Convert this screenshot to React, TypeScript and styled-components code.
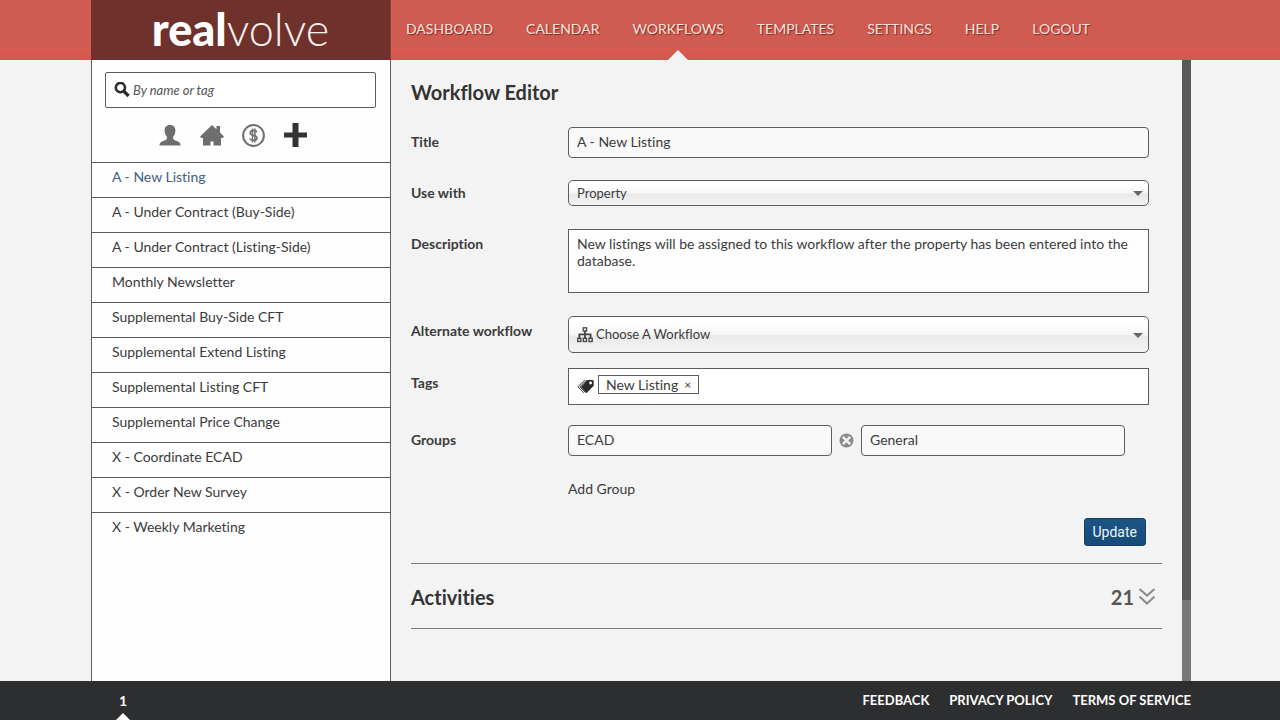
import React from "react";
import styled, { createGlobalStyle } from "styled-components";

const INK = "#3b3b3b";
const LINE = "#5c5c5c";
const PAPER = "#f3f3f3";

const GlobalStyle = createGlobalStyle`
  *, *::before, *::after { box-sizing: border-box; }
  body {
    margin: 0;
    background: ${PAPER};
    color: ${INK};
    font-family: Lato, "Liberation Sans", sans-serif;
    font-size: 14px;
    line-height: 18px;
    font-variant-ligatures: none;
  }
  a { color: inherit; text-decoration: none; }
  button, input, select, textarea { font: inherit; color: inherit; font-variant-ligatures: none; }
`;

const Page = styled.div`
  min-height: 100vh;
  display: flex;
  flex-direction: column;
`;

const Header = styled.header`
  height: 60px;
  padding: 0 89px 0 91px;
  background: linear-gradient(to bottom, #d05c51 0, #d05c51 48px, #db5a50 49px, #cf584d 60px);
`;

const HeaderInner = styled.div`
  display: flex;
  height: 100%;
`;

const Logo = styled.a`
  flex: 0 0 300px;
  background: #6e312c;
  border-right: 1px solid #8a3f38;
  color: #fdf1ee;
  font-size: 45px;
  line-height: 58px;
  font-weight: 300;
  text-align: center;
`;

const LogoBold = styled.span`
  font-weight: 900;
  color: #ffffff;
`;

const Nav = styled.nav`
  display: flex;
  gap: 33px;
  padding-left: 15px;
`;

const NavLink = styled.a`
  position: relative;
  color: #fbe3dc;
  line-height: 58px;
  white-space: nowrap;
  text-shadow: 1px 1px 1px rgba(90, 20, 20, 0.7);

  &[aria-current]::after {
    content: "";
    position: absolute;
    left: 50%;
    bottom: 0;
    margin-left: -10px;
    border: 10px solid transparent;
    border-top: 0;
    border-bottom-color: ${PAPER};
  }
`;

const Body = styled.div`
  flex: 1;
  display: flex;
  padding: 0 89px 0 91px;
`;

const Sidebar = styled.aside`
  flex: 0 0 300px;
  background: #fefefe;
  border: solid ${LINE};
  border-width: 0 1px;
`;

const SearchBox = styled.label`
  display: flex;
  align-items: center;
  gap: 3px;
  height: 36px;
  margin: 12px 14px 0 13px;
  padding: 0 8px;
  border: 1px solid ${LINE};
  border-radius: 2px;
  background: #ffffff;
`;

const SearchInput = styled.input`
  flex: 1;
  min-width: 0;
  border: 0;
  padding: 0;
  background: none;
  outline: none;
  font-size: 13px;
  font-style: italic;
  &::placeholder { color: #555555; opacity: 1; }
`;

const Filters = styled.div`
  display: flex;
  justify-content: center;
  align-items: center;
  gap: 18px;
  height: 54px;
  padding-right: 16px;
`;

const IconButton = styled.button<{ $dark?: boolean }>`
  display: flex;
  padding: 0;
  border: 0;
  background: none;
  color: ${(p) => (p.$dark ? "#333333" : "#6e6e6e")};
  cursor: pointer;
`;

const WorkflowList = styled.ul`
  margin: 0;
  padding: 0;
  list-style: none;
`;

const WorkflowItem = styled.li`
  border-top: 1px solid ${LINE};
`;

const WorkflowLink = styled.a`
  display: block;
  padding: 5px 20px 11px;
  &[aria-current] { color: #40607f; }
`;

const Main = styled.main`
  flex: 1;
  min-width: 0;
  padding: 21px 20px 40px;
`;

const Heading = styled.h1`
  margin: 0 0 24px;
  font-size: 20px;
  line-height: 22px;
  color: #333333;
`;

const Form = styled.form`
  display: flex;
  flex-direction: column;
  padding-right: 13px;
`;

const Row = styled.div<{ $gap: number }>`
  display: grid;
  grid-template-columns: 157px 1fr;
  align-items: start;
  margin-bottom: ${(p) => p.$gap}px;
`;

const Label = styled.label<{ $compact?: boolean }>`
  padding-top: ${(p) => (p.$compact ? 4 : 6)}px;
  font-weight: 700;
`;

const TextField = styled.input`
  width: 100%;
  min-width: 0;
  height: 31px;
  padding: 0 8px 2px;
  border: 1px solid ${LINE};
  border-radius: 4px;
  background: #f9f9f9;
`;

const TextArea = styled.textarea`
  display: block;
  width: 100%;
  height: 64px;
  padding: 5px 8px;
  border: 1px solid ${LINE};
  border-radius: 0;
  background: #fefefe;
  line-height: 17px;
  resize: none;
`;

const SelectWrap = styled.div`
  position: relative;
  color: #555555;
`;

const Select = styled.select<{ $tall?: boolean }>`
  display: block;
  width: 100%;
  height: ${(p) => (p.$tall ? 37 : 26)}px;
  padding: 0 24px 1px ${(p) => (p.$tall ? 27 : 8)}px;
  border: 1px solid ${LINE};
  border-radius: 5px;
  background: linear-gradient(to bottom, #ffffff 20%, #f6f6f6 50%, #e9e9e9 54%, #f4f4f4 100%);
  font-size: 13px;
  color: ${INK};
  appearance: none;
`;

const SelectIcon = styled.span`
  position: absolute;
  left: 9px;
  top: 0;
  bottom: 0;
  display: flex;
  align-items: center;
  color: #444444;
  pointer-events: none;
`;

const SelectArrow = styled.span`
  position: absolute;
  right: 6px;
  top: 50%;
  border: 5px solid transparent;
  border-top-color: #666666;
  border-bottom: 0;
  margin-top: -2px;
  pointer-events: none;
`;

const TagBox = styled.div`
  display: flex;
  align-items: flex-start;
  gap: 4px;
  height: 37px;
  padding: 6px 8px;
  border: 1px solid ${LINE};
  background: #ffffff;
`;

const TagMark = styled.span`
  display: flex;
  padding-top: 3px;
`;

const Tag = styled.span`
  display: flex;
  gap: 6px;
  height: 19px;
  padding: 0 7px;
  border: 1px solid ${LINE};
  line-height: 17px;
`;

const TagRemove = styled.button`
  padding: 0;
  border: 0;
  background: none;
  font-size: 12px;
  line-height: 17px;
  cursor: pointer;
`;

const TagInput = styled.input`
  flex: 1;
  min-width: 0;
  height: 19px;
  border: 0;
  padding: 0;
  outline: none;
`;

const Groups = styled.div`
  display: grid;
  grid-template-columns: 1fr 29px 1fr 24px;
  align-items: center;
  justify-items: center;
`;

const TextButton = styled.button`
  grid-column: 2;
  justify-self: start;
  padding: 0;
  border: 0;
  background: none;
  cursor: pointer;
`;

const Submit = styled.button`
  align-self: flex-end;
  height: 28px;
  margin-right: 3px;
  padding: 0 8px;
  border: 1px solid #17405f;
  border-radius: 3px;
  background: linear-gradient(to bottom, #1c5584, #174a78);
  color: #eef5fb;
  font-family: Roboto, "Liberation Sans", sans-serif;
`;

const Activities = styled.section`
  display: flex;
  align-items: center;
  justify-content: space-between;
  height: 66px;
  margin-top: 17px;
  padding: 2px 6px 0 0;
  border: solid #777777;
  border-width: 1px 0;
`;

const SectionTitle = styled.h2`
  margin: 0;
  font-size: 20px;
  line-height: 22px;
  color: #333333;
`;

const Toggle = styled.button`
  display: flex;
  align-items: center;
  gap: 4px;
  padding: 0;
  border: 0;
  background: none;
  color: #555555;
  font-size: 20px;
  line-height: 22px;
  font-weight: 700;
`;

const Scroll = styled.div`
  flex: 0 0 9px;
  display: flex;
  background: #777777;
`;

const ScrollThumb = styled.div`
  flex: 1;
  height: 87%;
  background: #595959;
`;

const Footer = styled.footer`
  display: flex;
  justify-content: space-between;
  height: 39px;
  padding: 0 89px 0 116px;
  background: #2d2e2f;
  color: #ffffff;
  font-size: 13px;
  font-weight: 700;
  line-height: 39px;
`;

const PageNumber = styled.a`
  position: relative;
  width: 14px;
  text-align: center;
  font-size: 14px;
  &::after {
    content: "";
    position: absolute;
    left: 0;
    bottom: 0;
    border: 7px solid transparent;
    border-top: 0;
    border-bottom-color: #ffffff;
  }
`;

const FooterLinks = styled.nav`
  display: flex;
  gap: 20px;
`;

const SearchIcon = () => (
  <svg width="16" height="16" viewBox="0 0 16 16" fill="none" stroke="#2c2c2c" aria-hidden>
    <circle cx="6.4" cy="5.6" r="4.6" strokeWidth="2.6" />
    <path d="M9.6 9 14.600 14" strokeWidth="3.2" />
  </svg>
);

const PersonIcon = () => (
  <svg width="24" height="24" viewBox="0 0 24 24" fill="currentColor" aria-hidden>
    <path d="M12 2c3.600 0 5.500 2.300 5.400 5.700 0 2.600-1 4.700-2.300 6v2c.4 1.300 2.300 1.800 4.400 2.600 1.900.8 3 1.700 3 4.200H1.500c0-2.500 1.100-3.400 3-4.200 2.100-.8 4-1.300 4.400-2.600v-2c-1.300-1.300-2.300-3.400-2.300-6C6.500 4.300 8.400 2 12 2z" />
  </svg>
);

const HouseIcon = () => (
  <svg width="24" height="24" viewBox="0 0 24 24" fill="currentColor" aria-hidden>
    <path d="M12 2 0 13.500 1.300 15H3v7.500h7.500V18.500h3v4H21V15h1.700L24 13.500l-4-4V3h-3.500v3.200z" />
  </svg>
);

const DollarIcon = () => (
  <svg width="24" height="24" viewBox="0 0 24 24" fill="none" stroke="currentColor" aria-hidden>
    <circle cx="11.500" cy="12.500" r="10.400" strokeWidth="2" />
    <path d="M15 9.300C14.500 8.100 13.300 7.600 11.600 7.600c-2 0-3.500.9-3.500 2.300 0 3.500 7 1.600 7 5.100 0 1.600-1.500 2.500-3.500 2.500-1.900 0-3.300-.7-3.800-2M10.500 5.500v14M12.900 5.500v14" strokeWidth="1.500" />
  </svg>
);

const PlusIcon = () => (
  <svg width="24" height="24" viewBox="0 0 24 24" fill="currentColor" aria-hidden>
    <path d="M8.500 0h6v9.500H23v5h-8.500V24h-6v-9.500H-1v-5h9.500z" />
  </svg>
);

const TreeIcon = () => (
  <svg width="16" height="16" viewBox="0 0 16 16" fill="none" stroke="currentColor" strokeWidth="1.300" aria-hidden>
    <rect x="6.200" y="0.800" width="3.400" height="3.200" />
    <path d="M8 4v7M2.400 11V7.400h11.200V11" strokeWidth="1.800" />
    <rect x="0.700" y="11.300" width="3.200" height="3.200" />
    <rect x="6.300" y="11.300" width="3.200" height="3.200" />
    <rect x="12" y="11.300" width="3.200" height="3.200" />
  </svg>
);

const TagsIcon = () => (
  <svg width="17" height="16" viewBox="0 0 17 16" aria-hidden>
    <path d="M8 2 .8 8.800l6 6M10 2 2.800 8.800l6 6" fill="none" stroke="#444444" />
    <path d="M10.500 2h4.700c1 0 1.500.5 1.500 1.500v4.200L9.600 15 3.800 9z" fill="#2b2b2b" />
    <circle cx="13.600" cy="5" r="1.400" fill="#ffffff" />
  </svg>
);

const RemoveIcon = () => (
  <svg width="15" height="15" viewBox="0 0 15 15" aria-hidden>
    <circle cx="7.500" cy="7.500" r="7" fill="#8b8b8b" />
    <path d="M3.800 3.800l7.400 7.400M11.200 3.800l-7.400 7.400" stroke="#f0f0f0" strokeWidth="2.600" />
  </svg>
);

const ChevronsIcon = () => (
  <svg width="18" height="18" viewBox="0 0 18 18" fill="none" stroke="#8e8e8e" strokeWidth="2.200" aria-hidden>
    <path d="M1.500 1 9 7.500 16.500 1M1.500 8.500 9 15.500l7.500-7" />
  </svg>
);

const NAV = ["DASHBOARD", "CALENDAR", "WORKFLOWS", "TEMPLATES", "SETTINGS", "HELP", "LOGOUT"];

const WORKFLOWS = [
  "A - New Listing",
  "A - Under Contract (Buy-Side)",
  "A - Under Contract (Listing-Side)",
  "Monthly Newsletter",
  "Supplemental Buy-Side CFT",
  "Supplemental Extend Listing",
  "Supplemental Listing CFT",
  "Supplemental Price Change",
  "X - Coordinate ECAD",
  "X - Order New Survey",
  "X - Weekly Marketing",
];

export default function App() {
  return (
    <Page>
      <GlobalStyle />
      <Header>
        <HeaderInner>
          <Logo href="#"><LogoBold>real</LogoBold>volve</Logo>
          <Nav>
            {NAV.map((name) => (
              <NavLink key={name} href="#" aria-current={name === "WORKFLOWS" ? "page" : undefined}>
                {name}
              </NavLink>
            ))}
          </Nav>
        </HeaderInner>
      </Header>

      <Body>
        <Sidebar>
          <SearchBox>
            <SearchIcon />
            <SearchInput type="text" placeholder="By name or tag" aria-label="Search workflows" />
          </SearchBox>
          <Filters>
            <IconButton type="button" aria-label="Contacts"><PersonIcon /></IconButton>
            <IconButton type="button" aria-label="Properties"><HouseIcon /></IconButton>
            <IconButton type="button" aria-label="Transactions"><DollarIcon /></IconButton>
            <IconButton type="button" aria-label="Add workflow" $dark><PlusIcon /></IconButton>
          </Filters>
          <WorkflowList>
            {WORKFLOWS.map((name, i) => (
              <WorkflowItem key={name}>
                <WorkflowLink href="#" aria-current={i === 0 ? "true" : undefined}>{name}</WorkflowLink>
              </WorkflowItem>
            ))}
          </WorkflowList>
        </Sidebar>

        <Main>
          <Heading>Workflow Editor</Heading>
          <Form onSubmit={(e) => e.preventDefault()}>
            <Row $gap={22}>
              <Label htmlFor="title">Title</Label>
              <TextField id="title" defaultValue="A - New Listing" />
            </Row>
            <Row $gap={23}>
              <Label htmlFor="use" $compact>Use with</Label>
              <SelectWrap>
                <Select id="use"><option>Property</option></Select>
                <SelectArrow />
              </SelectWrap>
            </Row>
            <Row $gap={23}>
              <Label htmlFor="description">Description</Label>
              <TextArea
                id="description"
                defaultValue="New listings will be assigned to this workflow after the property has been entered into the database."
              />
            </Row>
            <Row $gap={15}>
              <Label htmlFor="alternate">Alternate workflow</Label>
              <SelectWrap>
                <Select id="alternate" $tall><option>Choose A Workflow</option></Select>
                <SelectIcon><TreeIcon /></SelectIcon>
                <SelectArrow />
              </SelectWrap>
            </Row>
            <Row $gap={20}>
              <Label htmlFor="tags">Tags</Label>
              <TagBox>
                <TagMark><TagsIcon /></TagMark>
                <Tag>New Listing <TagRemove type="button" aria-label="Remove New Listing">×</TagRemove></Tag>
                <TagInput id="tags" />
              </TagBox>
            </Row>
            <Row $gap={24}>
              <Label htmlFor="group">Groups</Label>
              <Groups>
                <TextField id="group" defaultValue="ECAD" />
                <IconButton type="button" aria-label="Remove group ECAD"><RemoveIcon /></IconButton>
                <TextField aria-label="Second group" defaultValue="General" />
              </Groups>
            </Row>
            <Row $gap={20}>
              <TextButton type="button">Add Group</TextButton>
            </Row>
            <Submit type="submit">Update</Submit>
          </Form>
          <Activities>
            <SectionTitle>Activities</SectionTitle>
            <Toggle type="button" aria-label="Show 21 activities">21 <ChevronsIcon /></Toggle>
          </Activities>
        </Main>
        <Scroll><ScrollThumb /></Scroll>
      </Body>

      <Footer>
        <PageNumber href="#">1</PageNumber>
        <FooterLinks>
          <a href="#">FEEDBACK</a>
          <a href="#">PRIVACY POLICY</a>
          <a href="#">TERMS OF SERVICE</a>
        </FooterLinks>
      </Footer>
    </Page>
  );
}
